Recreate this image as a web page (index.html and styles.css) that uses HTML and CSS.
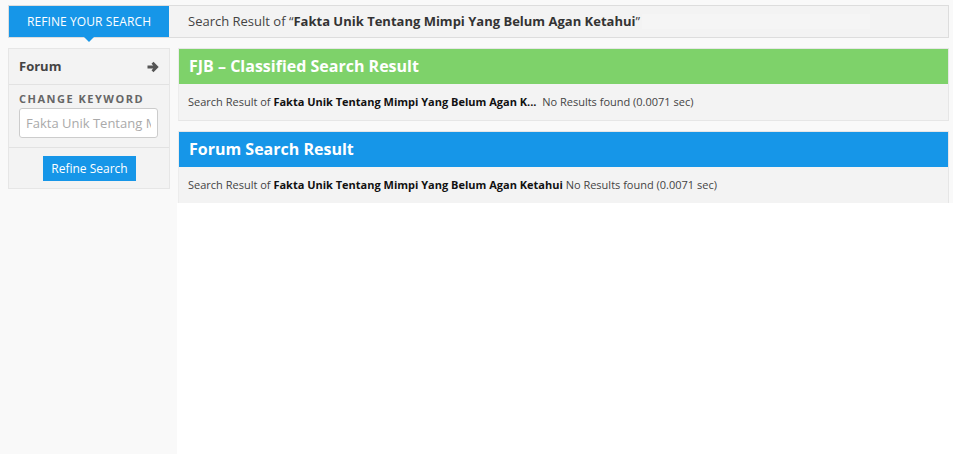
FILE: index.html
```html
<!DOCTYPE html>
<html>
<head>
<meta charset="utf-8">
<title>Search Result</title>
<link rel="stylesheet" href="styles.css">
</head>
<body>
<div class="topbar">
	<div class="tab">REFINE YOUR SEARCH</div>
	<div class="heading">Search Result of “<b>Fakta Unik Tentang Mimpi Yang Belum Agan Ketahui</b>”<span class="blank"></span></div>
</div>
<div class="wrap">
	<div class="side">
		<div class="box">
			<div class="row forum">
				<span>Forum</span>
				<svg width="12" height="12" viewBox="0 0 12 12"><path d="M0.5 6h9M5.5 1.8l4.2 4.2-4.2 4.2" fill="none" stroke="#555" stroke-width="2.8"/></svg>
			</div>
			<div class="row keyword">
				<label>CHANGE KEYWORD</label>
				<input type="text" placeholder="Fakta Unik Tentang Mimpi Yang Belum Agan Ketahui">
			</div>
			<div class="row act">
				<button>Refine Search</button>
			</div>
		</div>
	</div>
	<div class="main">
		<div class="result">
			<div class="head green">FJB – Classified Search Result</div>
			<div class="body">Search Result of <b>Fakta Unik Tentang Mimpi Yang Belum Agan K...</b>&nbsp; No Results found (0.0071 sec)</div>
		</div>
		<div class="result last">
			<div class="head blue">Forum Search Result</div>
			<div class="body">Search Result of <b>Fakta Unik Tentang Mimpi Yang Belum Agan Ketahui</b> No Results found (0.0071 sec)</div>
		</div>
		<div class="fill"></div>
	</div>
</div>
</body>
</html>
```
FILE: styles.css
```css
*{ margin:0; padding:0; box-sizing:border-box;}
html, body{ height:100%;}
body{ font:12px/1.4 "Open Sans", Arial, sans-serif; color:#444; background:#f9f9f9; padding:5px 4px 0 8px; display:flex; flex-direction:column;}

.topbar{ display:flex; height:33px; border:1px solid #ddd; background:#f3f3f3;}
.tab{ position:relative; width:160px; background:#1696e8; color:#fff; font-size:12px; text-align:center; line-height:31px; letter-spacing:0.1px;}
.tab:after{ content:""; position:absolute; left:74px; bottom:-5px; border:6px solid transparent; border-top-color:#1696e8; border-bottom:0;}
.heading{ flex:1; padding-left:19px; font-size:13px; line-height:31px; color:#444; display:flex; align-items:center; white-space:nowrap;}
.heading b{ color:#333;}
.blank{ display:inline-block; width:228px; height:15px; background:#f5f5f5; margin-left:2px;}

.wrap{ display:flex; gap:8px; margin-top:10px; flex:1;}
.side{ width:162px;}
.box{ border:1px solid #e6e6e6; background:#f3f3f3;}
.row{ border-bottom:1px solid #e2e2e2;}
.row:last-child{ border-bottom:0;}
.forum{ height:36px; display:flex; align-items:center; justify-content:space-between; padding:0 10px 0 10px; font-weight:bold; font-size:13px; color:#444;}
.keyword{ padding:7px 10px 9px;}
.keyword label{ display:block; font-size:11px; font-weight:bold; letter-spacing:1.5px; color:#666; line-height:14px;}
.keyword input{ margin-top:2px; width:139px; height:30px; border:1px solid #ccc; border-radius:3px; padding:0 6px; font:13px "Open Sans", Arial, sans-serif; color:#444; background:#fff;}
.keyword input::placeholder{ color:#aaa;}
.act{ padding:8px 0 7px; text-align:center;}
.act button{ width:93px; height:25px; border:0; background:#1696e8; color:#fff; font:12px "Open Sans", Arial, sans-serif; margin-left:1px;}

.main{ flex:1; display:flex; flex-direction:column;}
.result{ border:1px solid #e6e6e6; border-left-color:#ececec; background:#f3f3f3; margin-bottom:10px;}
.result.last{ margin-bottom:0; border-bottom:0;}
.head{ height:35px; line-height:34px; padding-left:10px; color:#fff; font-size:16px; font-weight:bold;}
.green{ background:#7ed26a;}
.blue{ background:#1696e8;}
.body{ height:36px; line-height:36px; padding-left:9px; font-size:11px; color:#444;}
.body b{ color:#111;}
.fill{ flex:1; background:#fff; margin:0 -4px 0 -1px;}
```
